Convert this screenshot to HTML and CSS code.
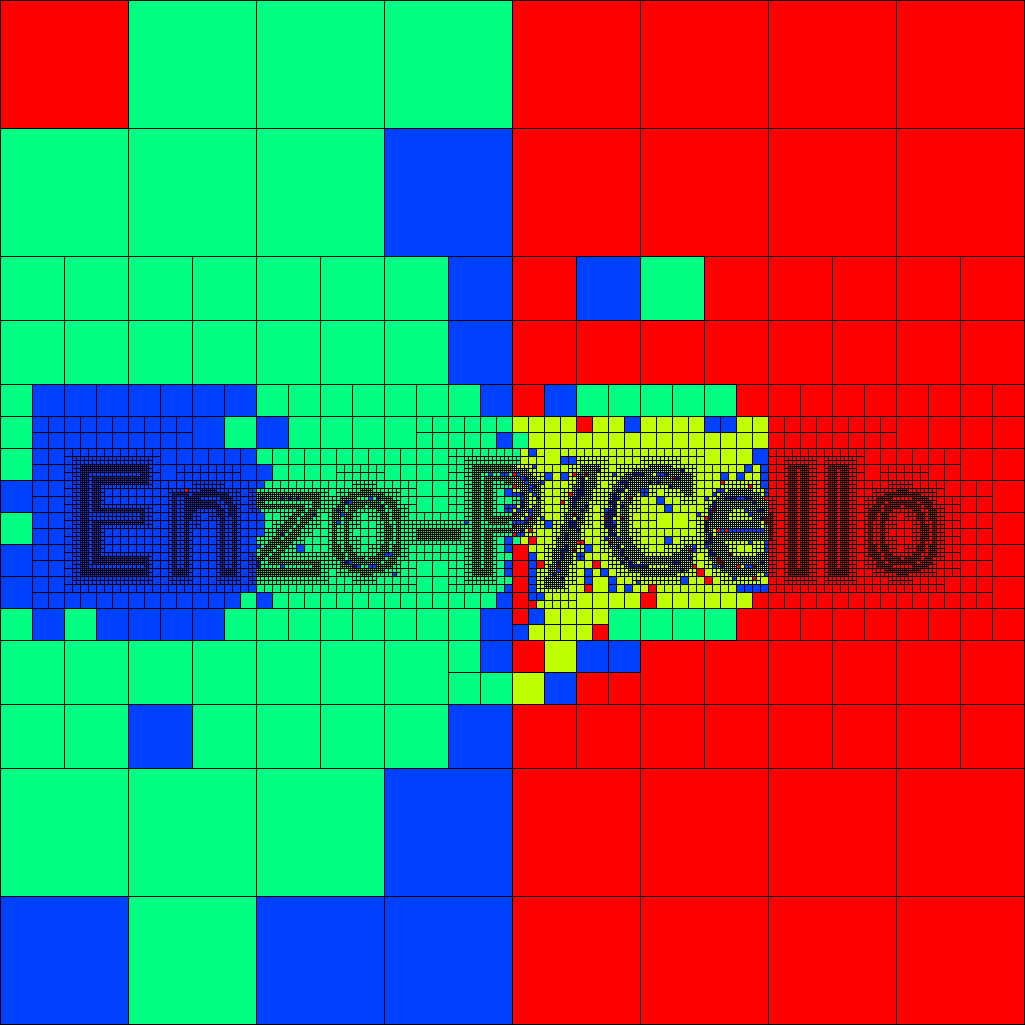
FILE: index.html
```html
<!DOCTYPE html>
<html lang="en">
<head>
<meta charset="utf-8">
<title>Enzo-P/Cello</title>
<link rel="stylesheet" href="styles.css">
</head>
<body>
<main class="mesh">
  <canvas id="mesh" class="mesh-canvas" width="1025" height="1025"></canvas>
  <h1 class="mesh-title">Enzo-P/Cello</h1>
</main>
<script src="mesh.js"></script>
</body>
</html>
```
FILE: styles.css
```css
html, body {
  margin: 0;
  padding: 0;
  background: #000;
}
.mesh {
  position: relative;
  width: 1025px;
  height: 1025px;
  overflow: hidden;
}
.mesh-canvas {
  display: block;
}
.mesh-title {
  position: absolute;
  left: 72px;
  top: 436px;
  margin: 0;
  font: 400 146px/1.2 "DejaVu Sans", sans-serif;
  white-space: nowrap;
  color: transparent;
}
```
FILE: mesh.js
```js
// Adaptive quadtree mesh refined along the outline of the title text.
const R = '#ff0000', G = '#00ff80', B = '#0040ff', Y = '#bfff00';

// glyph, contour bbox [x0, x1, y0, y1], band half-width
const GLYPHS = [
  ['E', 84, 148, 468, 572, 1],
  ['n', 172, 236, 492, 572, 1],
  ['z', 256, 316, 496, 572, 1],
  ['o', 332, 400, 492, 572, 1],
  ['-', 420, 456, 527, 538, 1],
  ['P', 476, 540, 468, 572, 1],
  ['/', 548, 596, 468, 584, 2],
  ['C', 608, 692, 468, 572, 2],
  ['e', 708, 768, 492, 572, 2],
  ['l', 792, 804, 464, 572, 1],
  ['l', 832, 844, 464, 572, 1],
  ['o', 868, 936, 492, 572, 1]
];

function textMask() {
  const W = 1025, H = 700;
  const c = document.createElement('canvas');
  c.width = W; c.height = H;
  const g = c.getContext('2d', { willReadFrequently: true });
  const split = new Set();
  g.font = '400 400px "DejaVu Sans"';
  g.textBaseline = 'alphabetic';
  for (const [ch, x0, x1, y0, y1, band] of GLYPHS) {
    g.setTransform(1, 0, 0, 1, 0, 0);
    g.clearRect(0, 0, W, H);
    const m = g.measureText(ch);
    const L = -m.actualBoundingBoxLeft, Rt = m.actualBoundingBoxRight;
    const T = -m.actualBoundingBoxAscent, Bt = m.actualBoundingBoxDescent;
    const sx = (x1 - x0) / (Rt - L), sy = (y1 - y0) / (Bt - T);
    g.setTransform(sx, 0, 0, sy, x0 - L * sx, y0 - T * sy);
    g.fillText(ch, 0, 0);
    const px = g.getImageData(0, 0, W, H).data;
    const on = (x, y) => px[(y * W + x) * 4 + 3] > 127;
    for (let y = 440; y < 600; y++) {
      for (let x = 60; x < 960; x++) {
        if (on(x, y) && !(on(x - 1, y) && on(x + 1, y) && on(x, y - 1) && on(x, y + 1))) {
          for (const ax of [x - band, x + band]) {
            for (const ay of [y - band, y + band]) split.add(key(ax & ~3, ay & ~3));
          }
        }
      }
    }
  }
  return split;
}

function key(x, y) { return x * 4096 + y; }

// 2:1 balance, neighbours included, up to the 128px base grid.
function balance(mask) {
  const levels = { 4: mask };
  for (let s = 4; s < 128; s *= 2) {
    const up = levels[s * 2] = levels[s * 2] || new Set();
    const P = s * 2;
    for (const k of levels[s]) {
      const x = Math.floor(k / 4096), y = k % 4096;
      for (let dx = -s; dx <= s; dx += s) {
        for (let dy = -s; dy <= s; dy += s) {
          const nx = x + dx, ny = y + dy;
          if (nx < 0 || ny < 0 || nx >= 1024 || ny >= 1024) continue;
          up.add(key(nx - nx % P, ny - ny % P));
        }
      }
    }
  }
  return levels;
}

// colour areas: [x, y, w, h, colour]; later entries win
const AREAS = [
  [0, 0, 512, 1024, G],
  [512, 0, 512, 1024, R],
  [32, 416, 224, 192, B],
  [512, 416, 256, 192, Y],
  [0, 0, 128, 128, R],
  [384, 128, 128, 128, B],
  [384, 768, 128, 128, B],
  [0, 896, 128, 128, B],
  [256, 896, 256, 128, B],
  [448, 256, 64, 128, B],
  [576, 256, 64, 64, B],
  [640, 256, 64, 64, G],
  [32, 384, 224, 32, B],
  [480, 384, 32, 32, B],
  [544, 384, 32, 32, B],
  [576, 384, 160, 32, G],
  [224, 416, 32, 32, G],
  [256, 416, 32, 32, B],
  [0, 480, 32, 32, B],
  [0, 544, 32, 64, B],
  [32, 608, 32, 32, B],
  [96, 608, 128, 32, B],
  [240, 592, 16, 16, G],
  [256, 592, 16, 16, B],
  [256, 464, 16, 16, B],
  [256, 480, 8, 8, B],
  [256, 512, 8, 24, B],
  [296, 544, 8, 8, B],
  [496, 432, 16, 16, B],
  [496, 592, 16, 16, B],
  [480, 608, 32, 32, B],
  [480, 640, 32, 32, B],
  [128, 704, 64, 64, B],
  [448, 704, 64, 64, B],
  // yellow block rows
  [576, 416, 16, 16, R],
  [624, 416, 16, 16, B],
  [704, 416, 32, 16, B],
  [512, 432, 16, 16, G],
  [512, 448, 8, 16, G],
  [528, 448, 8, 8, B],
  [552, 448, 8, 8, B],
  [560, 456, 16, 8, B],
  [752, 448, 16, 16, B],
  [744, 464, 8, 8, B],
  [760, 464, 8, 24, B],
  [544, 472, 8, 8, B],
  [560, 472, 8, 8, B],
  [720, 472, 8, 8, B],
  [736, 472, 8, 8, B],
  [640, 488, 8, 8, B],
  [656, 496, 8, 8, B],
  [664, 504, 8, 8, B],
  [544, 520, 8, 8, B],
  [664, 536, 8, 8, B],
  // lower part of the yellow area
  [512, 496, 8, 8, G],
  [512, 544, 16, 64, R],
  [528, 536, 8, 8, R],
  [528, 552, 8, 40, B],
  [536, 560, 8, 8, R],
  [504, 544, 8, 8, B],
  [512, 536, 8, 8, G],
  [504, 552, 8, 8, G],
  [504, 560, 8, 16, B],
  [504, 576, 8, 8, G],
  [504, 584, 8, 8, B],
  [504, 488, 8, 8, B],
  [504, 504, 8, 8, B],
  [504, 536, 8, 8, B],
  [528, 592, 16, 8, B],
  [528, 600, 8, 8, R],
  [576, 552, 8, 8, B],
  [584, 544, 8, 8, B],
  [592, 560, 8, 8, R],
  [584, 568, 8, 8, B],
  [600, 568, 8, 8, B],
  [600, 576, 8, 8, R],
  [608, 576, 8, 16, B],
  [584, 576, 8, 8, B],
  [584, 584, 8, 8, R],
  [624, 584, 8, 8, B],
  [680, 576, 8, 8, B],
  [696, 568, 8, 8, R],
  [704, 576, 8, 8, R],
  [648, 584, 8, 8, R],
  [736, 584, 32, 8, B],
  [640, 592, 16, 16, R],
  [752, 592, 16, 16, R],
  // row 608
  [512, 608, 16, 16, R],
  [528, 608, 16, 16, B],
  [544, 608, 64, 32, Y],
  [512, 624, 16, 16, B],
  [528, 624, 16, 16, Y],
  [592, 624, 16, 16, R],
  [608, 608, 128, 32, G],
  [736, 608, 32, 32, R],
  // row 640
  [544, 640, 32, 32, Y],
  [576, 640, 64, 32, B],
  [512, 672, 32, 32, Y],
  [544, 672, 32, 32, B]
];

// small single cells
const DOTS = {
  [B]: [
    // z, o, hyphen and P
    [260,496],[280,496],[288,496],[296,496],[344,500],[348,500],[368,496],[376,496],[380,504],[256,508],[312,512],[336,508],[340,512],[336,520],[280,532],[256,544],[256,560],[256,564],[280,564],[344,560],[348,560],[352,564],[356,564],[368,564],[372,564],[384,552],[388,552],[392,572],[488,472],[500,472],[504,472],[466,520],
    // P bowl
    [532,464],[540,468],[516,472],[520,476],[524,476],[524,480],[540,480],[528,484],[532,484],[528,488],[512,492],[516,492],[520,492],[532,492],[536,496],[520,496],[520,500],[520,504],[528,508],[512,504],[516,508],[528,512],[524,516],[540,516],[512,520],[516,520],[520,520],[524,520],[520,528],[516,532],[520,532],
    // slash
    [596,468],[580,476],[580,480],[580,484],[576,488],[580,488],[576,492],[580,492],[572,496],[576,496],[572,500],[572,504],[584,504],[580,508],[576,516],[568,520],[572,520],[568,524],[572,524],[576,528],[564,532],[564,536],[564,544],[560,548],[564,548],[560,552],[560,556],[556,560],[556,568],[552,572],[560,576],
    // C, left half
    [612,472],[628,476],[632,472],[636,472],[620,480],[624,480],[624,484],[616,488],[620,488],[612,492],[612,496],[616,496],[608,500],[612,500],[612,504],[620,504],[604,508],[608,508],[612,508],[604,512],[608,512],[612,512],[608,516],[604,520],[608,520],[612,520],[604,524],[608,524],[612,524],[608,528],[608,532],[612,532],[604,536],[616,536],[592,540],[596,540],[616,544],[620,548],[604,552],[620,552],[624,556],[628,560],[620,560],[628,564],[632,564],[636,564],[636,580],
    // C, right half
    [640,472],[656,472],[660,472],[664,472],[680,468],[648,480],[676,476],[656,480],[668,484],[672,560],[676,560],[640,564],[644,564],[692,544],[692,548],[688,556],[696,560],[700,564],[680,568],[696,512],
    // e
    [716,488],[720,488],[712,492],[704,496],[724,496],[728,496],[732,496],[736,496],[740,496],[744,496],[748,496],[764,488],[764,492],[712,500],[752,500],[712,504],[708,508],[746,508],[756,508],[760,508],[708,512],[748,512],[708,516],[760,516],[704,520],[704,524],[704,528],[720,528],[728,528],[732,528],[736,528],[740,528],[744,528],[748,528],[752,528],[756,528],[760,528],[708,532],[708,536],[704,540],[708,540],[748,540],[764,540],[704,544],[764,544],[708,548],[764,548],[708,552],[712,552],[760,560],[712,564],[720,564],[744,564],[748,564],[764,572],[732,576]
  ],
  [R]: [
    [184,488],
    [512,472],[512,484],[560,500],[512,512],[528,516],[512,524],[528,528],[512,532],
    [572,472],[584,472],[568,492],[572,512],[576,540],[580,540],[572,548],[556,564],
    [628,496],[604,516],[620,516],[608,540],
    [672,476],[720,480],[748,484],[764,496],[712,508],[704,516],[764,516],[764,520],[716,528],[724,528],
    [688,548],[728,552],[716,556],[716,560],[720,560],[692,564],[736,564],[752,564],[752,576]
  ]
};

function colourOf(x, y) {
  let col = G;
  for (const [ax, ay, aw, ah, c] of AREAS) {
    if (x >= ax && y >= ay && x < ax + aw && y < ay + ah) col = c;
  }
  return col;
}

function draw() {
  const mask = textMask();
  const levels = balance(mask);
  const ctx = document.getElementById('mesh').getContext('2d');
  const leaves = [];
  const walk = (x, y, s) => {
    if (s > 2 && levels[s] && levels[s].has(key(x, y))) {
      const h = s / 2;
      walk(x, y, h); walk(x + h, y, h); walk(x, y + h, h); walk(x + h, y + h, h);
    } else {
      leaves.push([x, y, s]);
    }
  };
  for (let y = 0; y < 1024; y += 128) {
    for (let x = 0; x < 1024; x += 128) walk(x, y, 128);
  }
  const dots = new Map();
  for (const c of [B, R]) {
    for (const [x, y] of DOTS[c]) dots.set(key(x & ~3, y & ~3), c);
  }
  ctx.fillStyle = '#000';
  ctx.fillRect(0, 0, 1025, 1025);
  for (const [x, y, s] of leaves) {
    const block = key(x & ~3, y & ~3);
    ctx.fillStyle = (s <= 4 && dots.get(block)) || colourOf(x, y);
    ctx.fillRect(x + 1, y + 1, s - 1, s - 1);
  }
}

draw();
```
